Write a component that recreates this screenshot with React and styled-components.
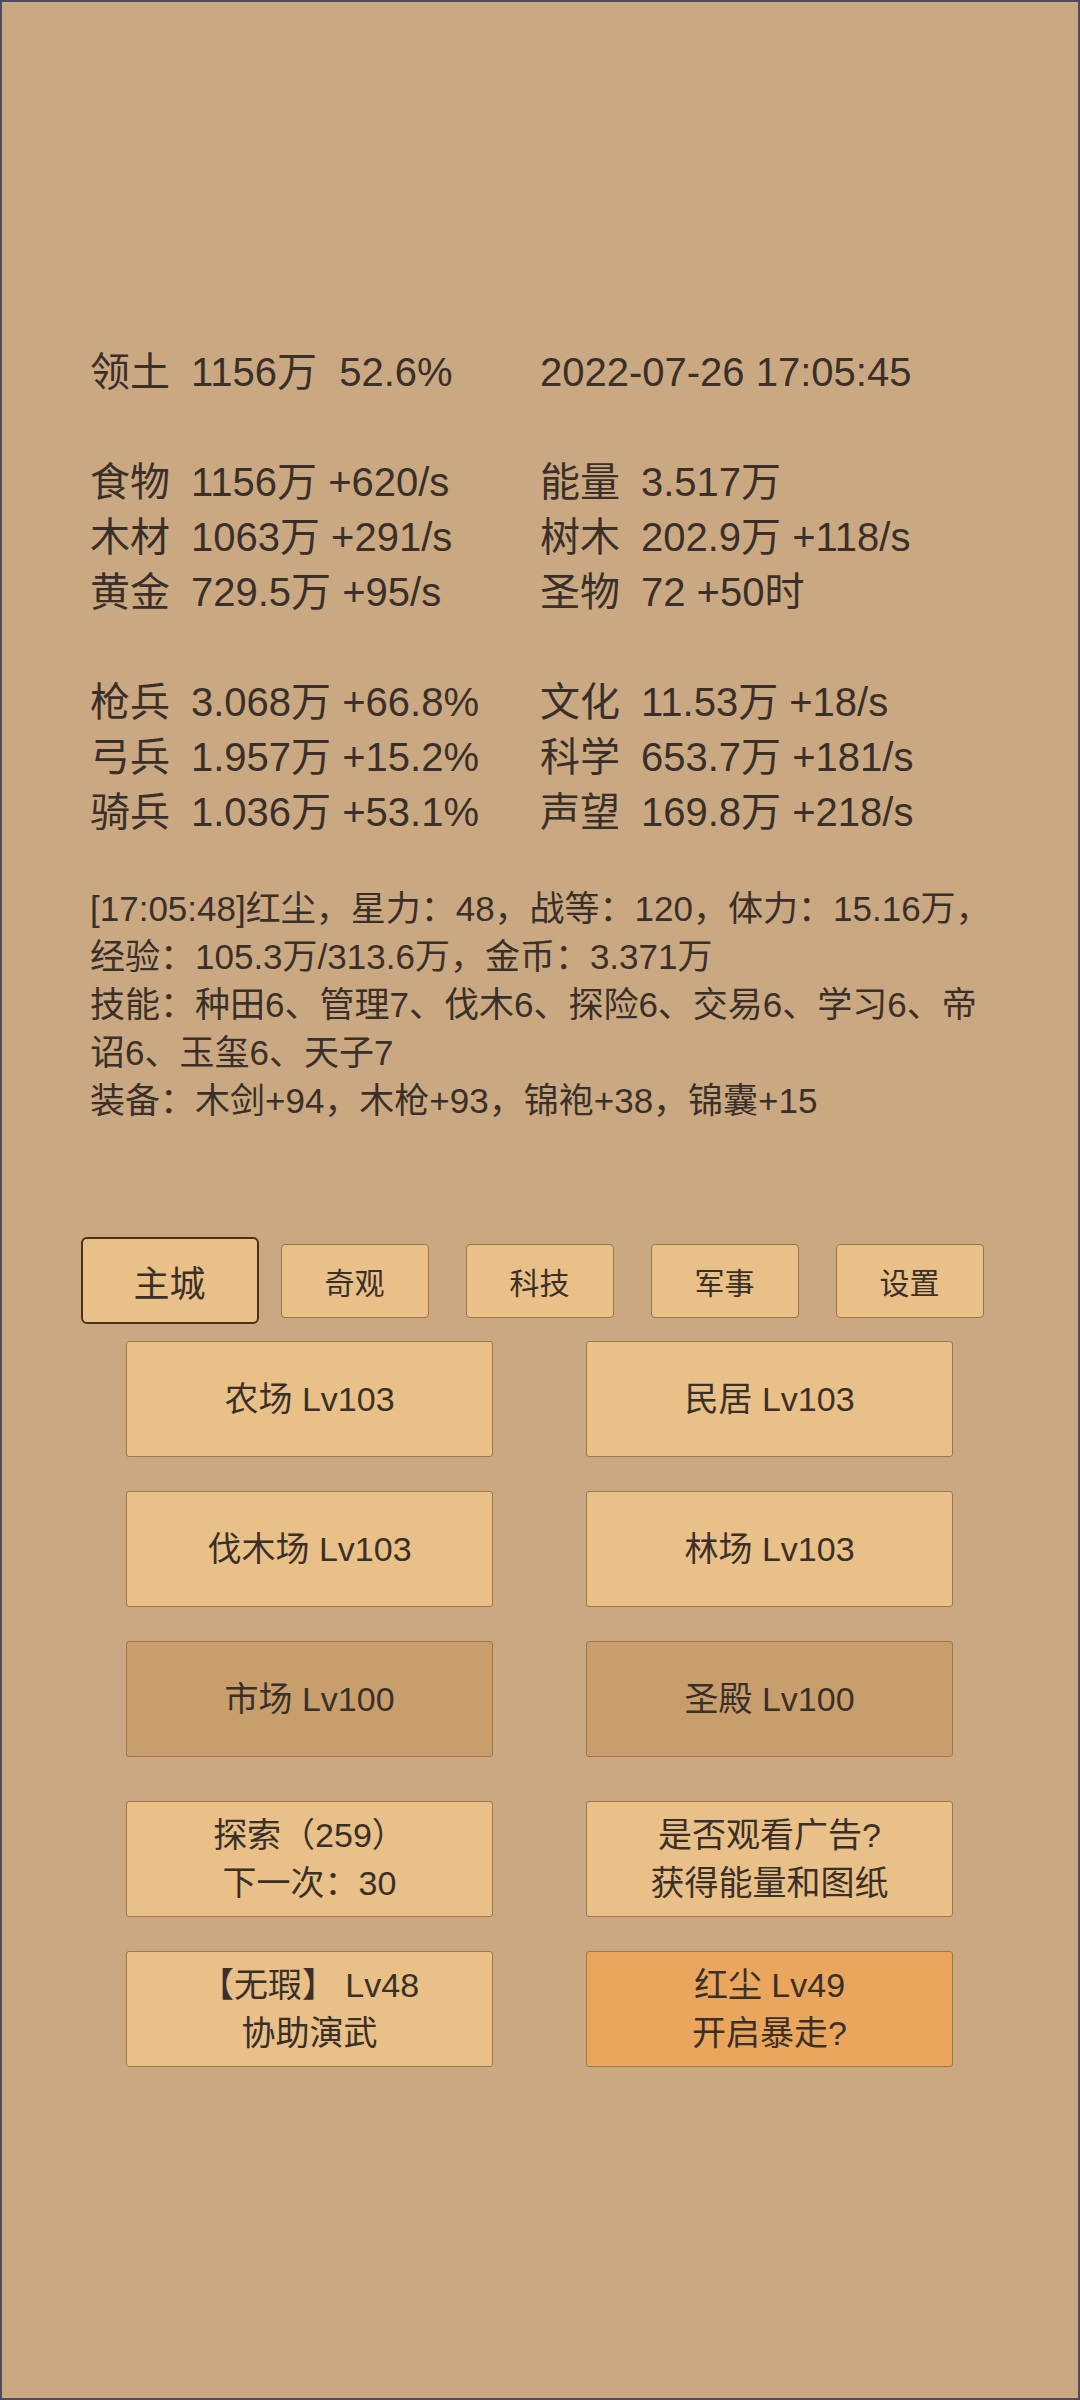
import React from "react";
import styled, { createGlobalStyle } from "styled-components";

const Global = createGlobalStyle`
  html, body { margin: 0; padding: 0; }
  body { background: #caa982; }
  * { box-sizing: border-box; }
`;

const FONT = `"Liberation Sans", Arial, "Noto Sans CJK SC", sans-serif`;

const Page = styled.div`
  width: 1080px;
  height: 2400px;
  border: 2px solid #4d4b5f;
  background: #caa982;
  color: #3a3029;
  font-family: ${FONT};
  padding: 343px 0 0 88px;
  overflow: hidden;
`;

const StatGroup = styled.div`
  display: grid;
  grid-template-columns: 450px auto;
  grid-auto-rows: 55px;
  font-size: 40px;
  line-height: 55px;
  margin-bottom: 55px;
`;

const Cell = styled.div`
  display: flex;
  align-items: center;
  white-space: nowrap;
`;

const Label = styled.span`
  width: 101px;
  flex: none;
`;

const Value = styled.span``;

const Log = styled.div`
  width: 914px;
  margin-top: -10px;
  font-size: 35px;
  line-height: 48px;
`;

const Tabs = styled.div`
  width: 925px;
  margin: 112px 0 0 -13px;
  display: flex;
  height: 87px;
  align-items: center;
`;

const TabCell = styled.div`
  flex: 1;
  display: flex;
  justify-content: center;
  align-items: center;
`;

const Tab = styled.div`
  display: flex;
  align-items: center;
  justify-content: center;
  background: #e9c087;
  width: ${(p) => (p.$active ? "178px" : "148px")};
  height: ${(p) => (p.$active ? "87px" : "74px")};
  font-size: ${(p) => (p.$active ? "36px" : "30px")};
  border: ${(p) => (p.$active ? "2px solid #4e3015" : "1px solid #9c7446")};
  border-radius: ${(p) => (p.$active ? "6px" : "4px")};
`;

const Grid = styled.div`
  width: 827px;
  margin-left: 36px;
  margin-top: ${(p) => p.$top}px;
  display: grid;
  grid-template-columns: 367px 367px;
  column-gap: 93px;
  row-gap: 34px;
`;

const Btn = styled.div`
  height: 116px;
  display: flex;
  flex-direction: column;
  align-items: center;
  justify-content: center;
  text-align: center;
  font-size: 34px;
  line-height: 48px;
  border: 1px solid #9e7748;
  border-radius: 3px;
  background: ${(p) =>
    p.$tone === "dim" ? "#c99e6d" : p.$tone === "hot" ? "#eba65e" : "#e9c087"};
`;

const statsA = [
  ["食物", "1156万 +620/s", "能量", "3.517万"],
  ["木材", "1063万 +291/s", "树木", "202.9万 +118/s"],
  ["黄金", "729.5万 +95/s", "圣物", "72 +50时"],
];
const statsB = [
  ["枪兵", "3.068万 +66.8%", "文化", "11.53万 +18/s"],
  ["弓兵", "1.957万 +15.2%", "科学", "653.7万 +181/s"],
  ["骑兵", "1.036万 +53.1%", "声望", "169.8万 +218/s"],
];

const tabs = ["主城", "奇观", "科技", "军事", "设置"];

const buildings = [
  ["农场 Lv103", ""],
  ["民居 Lv103", ""],
  ["伐木场 Lv103", ""],
  ["林场 Lv103", ""],
  ["市场 Lv100", "dim"],
  ["圣殿 Lv100", "dim"],
];

const actions = [
  [["探索（259）", "下一次：30"], ""],
  [["是否观看广告?", "获得能量和图纸"], ""],
  [["【无瑕】 Lv48", "协助演武"], ""],
  [["红尘 Lv49", "开启暴走?"], "hot"],
];

function Group({ rows }) {
  return (
    <StatGroup>
      {rows.map((r, i) => (
        <React.Fragment key={i}>
          <Cell>
            <Label>{r[0]}</Label>
            <Value>{r[1]}</Value>
          </Cell>
          <Cell>
            <Label>{r[2]}</Label>
            <Value>{r[3]}</Value>
          </Cell>
        </React.Fragment>
      ))}
    </StatGroup>
  );
}

export default function App() {
  return (
    <>
      <Global />
      <Page>
        <StatGroup>
          <Cell>
            <Label>领土</Label>
            <Value>1156万{"\u00a0\u00a0"}52.6%</Value>
          </Cell>
          <Cell>2022-07-26 17:05:45</Cell>
        </StatGroup>
        <Group rows={statsA} />
        <Group rows={statsB} />
        <Log>
          [17:05:48]红尘，星力：48，战等：120，体力：15.16万，经验：105.3万/313.6万，金币：3.371万
          <br />
          技能：种田6、管理7、伐木6、探险6、交易6、学习6、帝诏6、玉玺6、天子7
          <br />
          装备：木剑+94，木枪+93，锦袍+38，锦囊+15
        </Log>
        <Tabs>
          {tabs.map((t, i) => (
            <TabCell key={t}>
              <Tab $active={i === 0}>{t}</Tab>
            </TabCell>
          ))}
        </Tabs>
        <Grid $top={17}>
          {buildings.map(([t, tone]) => (
            <Btn key={t} $tone={tone}>
              {t}
            </Btn>
          ))}
        </Grid>
        <Grid $top={44}>
          {actions.map(([lines, tone]) => (
            <Btn key={lines[0]} $tone={tone}>
              <div>{lines[0]}</div>
              <div>{lines[1]}</div>
            </Btn>
          ))}
        </Grid>
      </Page>
    </>
  );
}
